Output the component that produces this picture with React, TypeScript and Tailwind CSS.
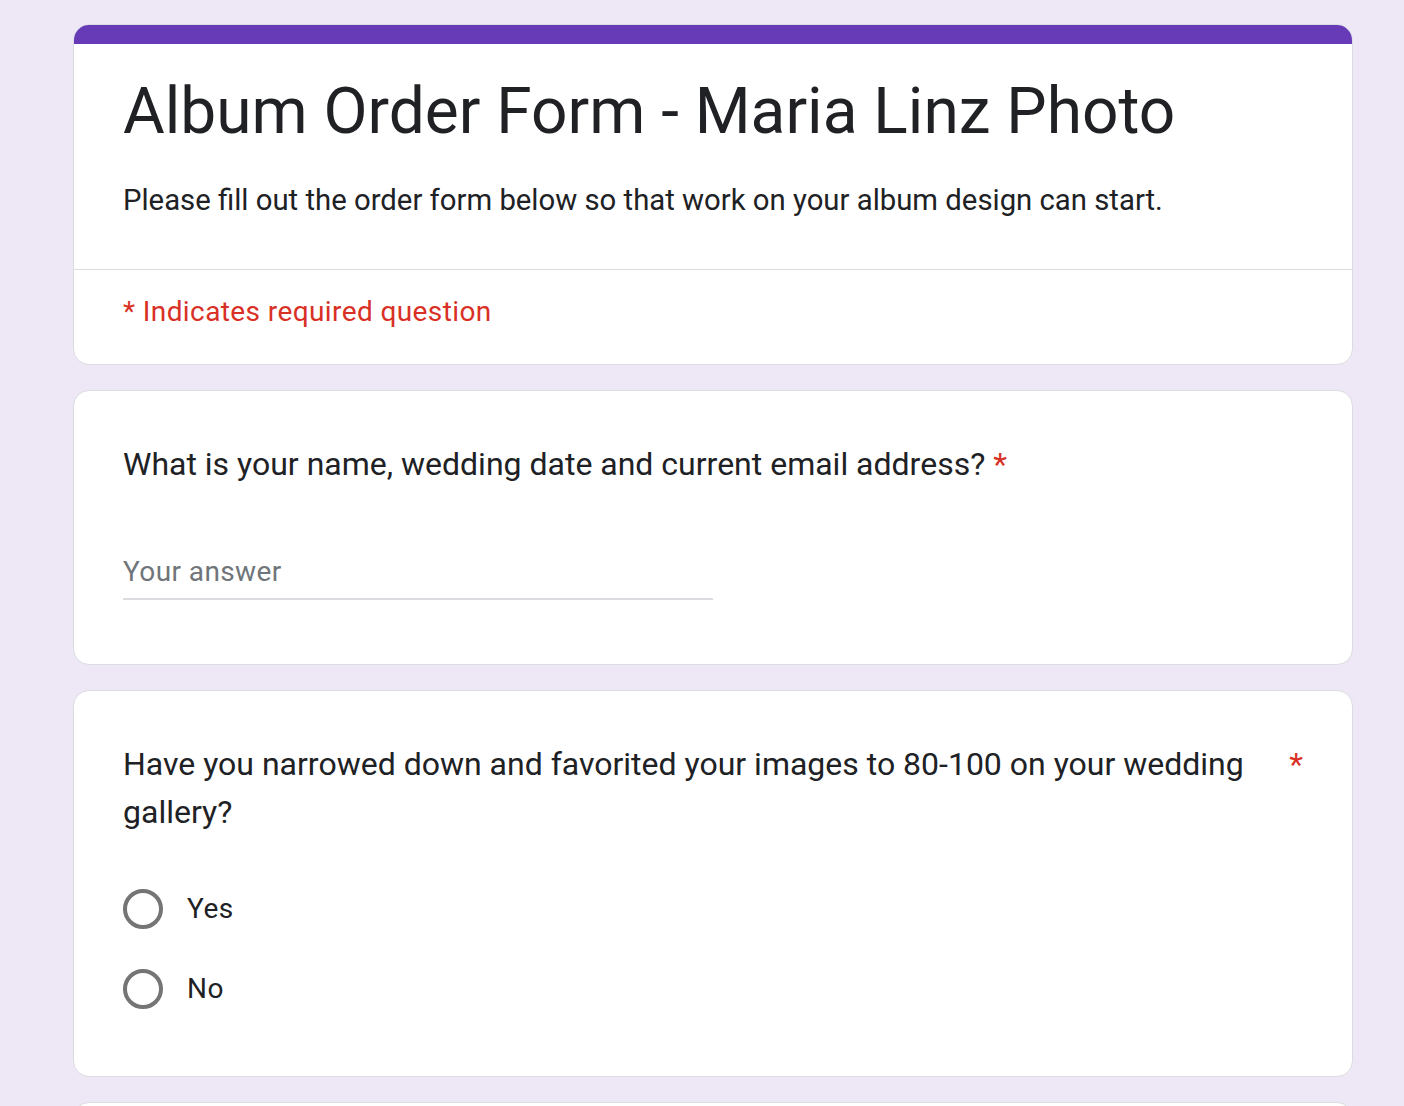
import { useState } from 'react'

const font = { fontFamily: 'Roboto, "Liberation Sans", Arial, sans-serif' }

function Card({ children, className = '' }: { children: React.ReactNode; className?: string }) {
  return (
    <div className={'bg-white border border-[#dadce0] rounded-[16px] ' + className}>{children}</div>
  )
}

function Radio({ label, checked, onClick }: { label: string; checked: boolean; onClick: () => void }) {
  return (
    <div className="flex items-center h-[80px] cursor-pointer" onClick={onClick}>
      <div className="w-[40px] h-[40px] rounded-full border-[4px] border-[#757575] flex items-center justify-center shrink-0">
        {checked && <div className="w-[20px] h-[20px] rounded-full bg-[#673ab7]" />}
      </div>
      <span className="ml-[24px] text-[28px] leading-[40px] text-[#202124] tracking-[0.5px]">{label}</span>
    </div>
  )
}

export default function App() {
  const [answer, setAnswer] = useState('')
  const [choice, setChoice] = useState('')

  return (
    <div className="min-h-screen bg-[#ede7f6] pt-[24px] pb-[40px]" style={font}>
      <div className="ml-[73px] w-[1280px] flex flex-col gap-[25px]">
        {/* header */}
        <div className="bg-white border border-[#dadce0] rounded-[16px] overflow-hidden">
          <div className="h-[20px] bg-[#673ab7] -mx-px -mt-px" />
          <div className="px-[49px] pt-[28px] pb-[49px]">
            <h1 className="text-[64px] leading-[80px] text-[#202124] font-normal">
              Album Order Form - Maria Linz Photo
            </h1>
            <p className="mt-[28px] text-[29.3px] leading-[40px] text-[#202124]">
              Please fill out the order form below so that work on your album design can start.
            </p>
          </div>
          <div className="border-t border-[#dadce0] px-[49px] pt-[22px] pb-[32px]">
            <p className="text-[28px] leading-[40px] text-[#d93025] tracking-[0.4px]">* Indicates required question</p>
          </div>
        </div>

        {/* question 1 */}
        <Card className="px-[49px] pt-[49px] pb-[64px]">
          <div className="flex text-[32px] leading-[48px] text-[#202124]">
            <span>What is your name, wedding date and current email address?</span>
            <span className="pl-[8px] text-[#d93025] shrink-0">*</span>
          </div>
          <div className="mt-[64px] w-1/2">
            <input
              value={answer}
              onChange={(e) => setAnswer(e.target.value)}
              placeholder="Your answer"
              className="w-full text-[28px] leading-[40px] h-[40px] text-[#202124] placeholder:text-[#70757a] outline-none tracking-[0.4px] mb-[6px]"
            />
            <div className="h-[2px] bg-[#dadce0]" />
          </div>
        </Card>

        {/* question 2 */}
        <Card className="px-[49px] pt-[49px] pb-[47px]">
          <div className="flex text-[32px] leading-[48px] text-[#202124]">
            <span>Have you narrowed down and favorited your images to 80-100 on your wedding gallery?</span>
            <span className="pl-[8px] text-[#d93025] shrink-0">*</span>
          </div>
          <div className="mt-[33px]">
            <Radio label="Yes" checked={choice === 'yes'} onClick={() => setChoice('yes')} />
            <Radio label="No" checked={choice === 'no'} onClick={() => setChoice('no')} />
          </div>
        </Card>

        <Card className="h-[300px]">
          <div />
        </Card>
      </div>
    </div>
  )
}
